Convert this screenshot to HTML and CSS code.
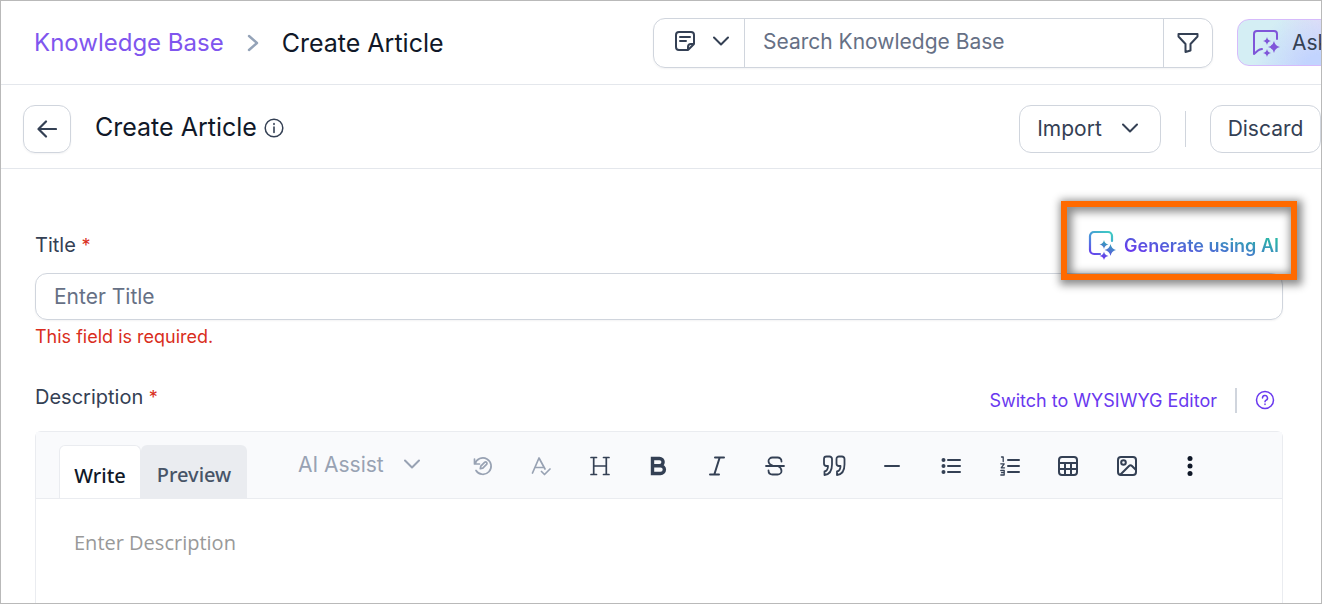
FILE: index.html
```html
<!DOCTYPE html>
<html lang="en">
<head>
  <meta charset="UTF-8">
  <meta name="viewport" content="width=device-width, initial-scale=1.0">
  <title>Create Article</title>
  <link rel="stylesheet" href="styles.css">
</head>
<body>
  <header class="topbar">
    <nav class="breadcrumb">
      <a href="#">Knowledge Base</a>
      <svg width="12" height="18" viewBox="0 0 12 18"><path d="M2 2l8 7-8 7" stroke="#94a3b8" stroke-width="2.400"/></svg>
      <span>Create Article</span>
    </nav>
    <div class="search">
      <button class="search-type" aria-label="Article type">
        <svg width="22" height="22" viewBox="0 0 22 22"><path d="M14 20H5a3 3 0 0 1-3-3V5a3 3 0 0 1 3-3h12a3 3 0 0 1 3 3v9l-6 6v-3a3 3 0 0 1 3-3h3M6 7h10M6 11h6"/></svg>
        <svg width="16" height="10" viewBox="0 0 16 10"><path d="M1 1.500l7 7 7-7"/></svg>
      </button>
      <input type="text" placeholder="Search Knowledge Base" aria-label="Search Knowledge Base">
      <button class="search-filter" aria-label="Filter">
        <svg width="22" height="22" viewBox="0 0 22 22"><path d="M1.500 2h19v2.500l-7 7.500v6.500l-5 1.500v-8l-7-7.500z"/></svg>
      </button>
    </div>
    <div class="ask-wrap">
      <button class="ask">
        <svg width="28" height="28" viewBox="0 0 28 28"><path d="M25 10V5a3 3 0 0 0-3-3H5a3 3 0 0 0-3 3v20l4-3.500c1.200-.9 2.200-1.300 4-1.500"/><path class="fill" d="M15 8q.6 3.400 4 4-3.400.6-4 4-.6-3.400-4-4 3.400-.6 4-4zM22 12q1 5 6 6-5 1-6 6-1-5-6-6 5-1 6-6zM15 20q.6 3.400 4 4-3.400.6-4 4-.6-3.400-4-4 3.400-.6 4-4z"/></svg>
        Ask
      </button>
    </div>
  </header>

  <div class="actionbar">
    <button class="btn back" aria-label="Back">
      <svg width="20" height="18" viewBox="0 0 20 18"><path d="M19 9H2M9 1.500L1.500 9 9 16.500" stroke-width="2.200"/></svg>
    </button>
    <h1>Create Article</h1>
    <svg width="20" height="20" viewBox="0 0 20 20"><circle cx="10" cy="10" r="8.800" stroke-width="1.500"/><path d="M10 9v5.500M10 5.500v1" stroke-width="1.600"/></svg>
    <div class="actions">
      <button class="btn import">Import
        <svg width="16" height="10" viewBox="0 0 16 10"><path d="M1 1.500l7 7 7-7"/></svg>
      </button>
      <span class="divider"></span>
      <button class="btn discard">Discard</button>
    </div>
  </div>

  <form class="article-form">
    <div class="title-head">
      <label for="title">Title <span class="required">*</span></label>
      <div class="generate-wrap">
        <button type="button" class="generate">
          <svg width="28" height="30" viewBox="0 0 28 30">
            <defs>
              <linearGradient id="ai" gradientUnits="userSpaceOnUse" x1="4" y1="26" x2="20" y2="2">
                <stop offset="0" stop-color="#6938ef"/>
                <stop offset="0.500" stop-color="#4a8edb"/>
                <stop offset="1" stop-color="#3ec8c4"/>
              </linearGradient>
              <linearGradient id="stars" gradientUnits="userSpaceOnUse" x1="15" y1="28" x2="22" y2="10">
                <stop offset="0" stop-color="#6938ef"/>
                <stop offset="1" stop-color="#2bb5b0"/>
              </linearGradient>
            </defs>
            <path d="M24 11V6a4 4 0 0 0-4-4H6a4 4 0 0 0-4 4v14a4 4 0 0 0 4 4h6" stroke="url(#ai)" stroke-width="2.200"/>
            <path fill="url(#stars)" stroke="none" d="M16 10q.7 3.800 4.500 4.500-3.800.7-4.500 4.500-.7-3.800-4.500-4.500 3.800-.7 4.500-4.500zM22.500 14q1 5 5.500 6-4.500 1-5.500 6-1-5-6-6 5-1 6-6zM16 21.500q.7 3.800 4.500 4.500-3.800.7-4.500 4-.7-3.300-4.500-4 3.800-.7 4.500-4.500z"/>
          </svg>
          <span>Generate using AI</span>
        </button>
        <div class="highlight"></div>
      </div>
    </div>
    <input type="text" id="title" class="title-input" placeholder="Enter Title">
    <p class="error">This field is required.</p>

    <div class="desc-head">
      <label for="description">Description <span class="required">*</span></label>
      <div class="desc-links">
        <a href="#">Switch to WYSIWYG Editor</a>
        <span class="bar"></span>
        <svg width="20" height="20" viewBox="0 0 20 20"><circle cx="10" cy="10" r="8.500"/><path d="M7.500 8a2.500 2.500 0 1 1 3.700 2.200c-.8.500-1.200.8-1.200 1.600M10 14v.6"/></svg>
      </div>
    </div>

    <div class="editor">
      <div class="toolbar">
        <div class="tabs">
          <button type="button" class="tab active">Write</button>
          <button type="button" class="tab">Preview</button>
        </div>
        <button type="button" class="assist">AI Assist
          <svg width="16" height="10" viewBox="0 0 16 10"><path d="M1 1.500l7 7 7-7"/></svg>
        </button>
        <div class="tools">
          <button type="button" class="muted" aria-label="Rewrite"><svg width="20" height="20" viewBox="0 0 20 20"><path d="M1.500 3v5h5M2 8a8.200 8.200 0 1 1 1 6.500M7.300 12.700l.5-2.500 4-4c1.400-.8 2.700.5 2 1.900l-4 4z" stroke-width="1.700"/></svg></button>
          <button type="button" class="muted" aria-label="Spell check"><svg width="20" height="20" viewBox="0 0 20 20"><path d="M1.500 17L8 2l6 11M4 11.500h8M10.500 15.500l3 3 5.500-5.500" stroke-width="1.700"/></svg></button>
          <button type="button" aria-label="Heading"><svg width="20" height="20" viewBox="0 0 20 20"><path d="M1 1.500h5.500M3.700 1.500v17M1 18.500h5.500M13.500 1.500H19M16.300 1.500v17M13.500 18.500H19M3.700 10h12.600" stroke-width="1.700"/></svg></button>
          <button type="button" aria-label="Bold"><svg width="20" height="20" viewBox="0 0 20 20"><path d="M4.500 2.500h7a3.600 3.600 0 0 1 0 7.200h-7zM4.500 9.700h8a3.900 3.900 0 0 1 0 7.800h-8z" stroke-width="3.400" stroke-linejoin="miter"/></svg></button>
          <button type="button" aria-label="Italic"><svg width="20" height="20" viewBox="0 0 20 20"><path d="M8 1.500h9M12.700 1.500L7.300 18.500M3 18.500h9"/></svg></button>
          <button type="button" aria-label="Strikethrough"><svg width="20" height="20" viewBox="0 0 20 20"><path d="M1 10h18M16.500 5.500c0-2.600-1.800-4-4-4h-5c-2.300 0-4 1.600-4 3.600 0 2.900 2 4 5 4.900M3.500 14.500c0 2.500 1.700 4 4 4h5c2.300 0 4-1.600 4-3.600 0-2.400-1.500-3.900-3.500-4.900" stroke-width="1.800"/></svg></button>
          <button type="button" aria-label="Quote"><svg width="24" height="22" viewBox="0 0 24 22"><path d="M10 9.500V4a2.500 2.500 0 0 0-2.500-2.500h-3A2.500 2.500 0 0 0 2 4v4.500A2.500 2.500 0 0 0 4.500 11H6c0 3.500-1 5-3.500 5.500v3.500c5-.5 7.500-3.700 7.500-10.500zM22.500 9.500V4A2.500 2.500 0 0 0 20 1.500h-3A2.500 2.500 0 0 0 14.500 4v4.500A2.500 2.500 0 0 0 17 11h1.500c0 3.500-1 5-3.500 5.500v3.500c5-.5 7.500-3.700 7.500-10.500z" stroke-width="1.800"/></svg></button>
          <button type="button" aria-label="Horizontal rule"><svg width="20" height="20" viewBox="0 0 20 20"><path d="M3 10h14"/></svg></button>
          <button type="button" aria-label="Bulleted list"><svg width="20" height="20" viewBox="0 0 20 20"><path d="M7 4h12M7 10h12M7 16h12"/><circle class="dot" cx="2.500" cy="4" r="2"/><circle class="dot" cx="2.500" cy="10" r="2"/><circle class="dot" cx="2.500" cy="16" r="2"/></svg></button>
          <button type="button" aria-label="Numbered list"><svg width="20" height="20" viewBox="0 0 20 20"><path d="M8 4h11M8 10h11M8 16h11"/><path d="M1.500 1h1.700v4.500M.8 7.800h3.400L1.200 11.800h3.300M.8 14.500h3.400v4.500H.8M1.500 16.700h2.700" stroke-width="1.300"/></svg></button>
          <button type="button" aria-label="Table"><svg width="20" height="20" viewBox="0 0 20 20"><rect x="1" y="1" width="18" height="18" rx="3"/><path d="M1 7h18M1 13h18M7 7v12M13 7v12"/></svg></button>
          <button type="button" aria-label="Image"><svg width="20" height="20" viewBox="0 0 20 20"><rect x="1" y="1" width="18" height="18" rx="3"/><circle cx="6.500" cy="6.500" r="2.300"/><path d="M3.500 18.500l8.500-8.500c1-1 2-1 3 0l4 4"/></svg></button>
        </div>
        <button type="button" class="more" aria-label="More"><svg width="6" height="20" viewBox="0 0 6 20"><circle cx="3" cy="2.500" r="2.500"/><circle cx="3" cy="10" r="2.500"/><circle cx="3" cy="17.500" r="2.500"/></svg></button>
      </div>
      <textarea id="description" placeholder="Enter Description"></textarea>
    </div>
  </form>
</body>
</html>
```
FILE: styles.css
```css
* {
  box-sizing: border-box;
}
body {
  margin: 0;
  height: 100vh;
  display: flex;
  flex-direction: column;
  overflow: hidden;
  border: 1px solid #b9b9b9;
  background-color: #fff;
  color: #344054;
  font-family: Inter, "Liberation Sans", sans-serif;
  font-size: 21px;
}
button, input, textarea {
  font: inherit;
  color: inherit;
  margin: 0;
  padding: 0;
  border: none;
  background: none;
}
button {
  display: flex;
  align-items: center;
  justify-content: center;
  white-space: nowrap;
  cursor: pointer;
}
a {
  text-decoration: none;
}
svg {
  flex: none;
  fill: none;
  stroke: #344054;
  stroke-width: 2;
  stroke-linecap: round;
  stroke-linejoin: round;
}
input::placeholder {
  color: #667085;
  opacity: 1;
}

/* top bar */
.topbar {
  display: flex;
  align-items: center;
  flex: none;
  height: 84px;
  padding-left: 33px;
  border-bottom: 1px solid #e4e7ec;
}
.breadcrumb {
  display: flex;
  align-items: center;
  gap: 23px;
  flex: 1;
  font-size: 25px;
  color: #101828;
  white-space: nowrap;
}
.breadcrumb a {
  font-size: 24px;
  color: #7f56ee;
}
.search {
  display: flex;
  width: 560px;
  height: 50px;
  border: 1px solid #d0d5dd;
  border-radius: 12px;
  box-shadow: 0 1px 2px rgba(16, 24, 40, 0.05);
}
.search input {
  flex: 1;
  min-width: 0;
  padding: 0 18px 2px;
  border: solid #d0d5dd;
  border-width: 0 1px;
}
.search-type {
  width: 90px;
  padding: 0 0 4px 4px;
  gap: 17px;
}
.search-filter {
  width: 48px;
}
.ask-wrap {
  width: 84px;
  margin-left: 24px;
  overflow: hidden;
}
.ask {
  height: 47px;
  padding: 0 14px;
  gap: 12px;
  border: 1px solid #d6bbfb;
  border-radius: 12px;
  background: radial-gradient(circle at 80% 120%, #c2d4fe 20%, rgba(199, 215, 254, 0) 70%), linear-gradient(to right, #d4eef4 40%, #e8e0f4 80%);
}
.ask svg {
  stroke: #7f56d9;
}
.ask .fill {
  fill: #7f56d9;
  stroke: none;
}

/* action bar */
.actionbar {
  display: flex;
  align-items: center;
  flex: none;
  height: 84px;
  padding-left: 22px;
  padding-top: 5px;
  border-bottom: 1px solid #e4e7ec;
}
.btn {
  height: 48px;
  padding-bottom: 2px;
  border: 1px solid #d0d5dd;
  border-radius: 12px;
}
.back {
  width: 48px;
  padding-bottom: 0;
  box-shadow: 0 1px 2px rgba(16, 24, 40, 0.05);
}
.actionbar > svg {
  margin-bottom: 3px;
}
h1 {
  margin: 0 7px 4px 24px;
  font-size: 25px;
  font-weight: 400;
  color: #101828;
}
.actions {
  display: flex;
  align-items: center;
  gap: 24px;
  margin-left: auto;
}
.import {
  width: 142px;
  padding-right: 5px;
  gap: 20px;
}
.divider {
  width: 1px;
  height: 36px;
  background-color: #d0d5dd;
}
.discard {
  width: 111px;
}

/* form */
.article-form {
  display: flex;
  flex-direction: column;
  flex: 1;
  min-height: 0;
  padding: 60px 38px 0 34px;
}
label {
  font-size: 20px;
  line-height: 26px;
}
.required {
  font-size: 18px;
  color: #d92d20;
}
.title-head {
  display: flex;
  align-items: center;
  justify-content: space-between;
  height: 32px;
}
.generate-wrap {
  position: relative;
  margin-right: 4px;
}
.generate {
  gap: 8px;
  font-size: 18px;
  font-weight: 600;
}
.generate span {
  background: linear-gradient(15deg, #6938ef 10%, #4775cf 50%, #2bb5a8 90%);
  -webkit-background-clip: text;
  background-clip: text;
  color: transparent;
}
.highlight {
  position: absolute;
  inset: -29px -18px -20px -27px;
  border: 6px solid #ff6a00;
  box-shadow: 2px 2px 8px 3px rgba(0, 0, 0, 0.45), inset 2px 2px 8px 3px rgba(0, 0, 0, 0.45);
  pointer-events: none;
}
.title-input {
  flex: none;
  height: 47px;
  margin-top: 12px;
  padding: 0 18px;
  border: 1px solid #d0d5dd;
  border-radius: 12px;
  box-shadow: 0 1px 2px rgba(16, 24, 40, 0.05);
}
.error {
  margin: 5px 0 0;
  font-size: 18px;
  line-height: 24px;
  color: #d92d20;
}
.desc-head {
  display: flex;
  justify-content: space-between;
  align-items: flex-start;
  height: 32px;
  margin-top: 35px;
}
.desc-links {
  display: flex;
  align-items: center;
  gap: 18px;
  height: 32px;
  margin-right: 8px;
  font-size: 18px;
}
.desc-links a {
  color: #6938ef;
}
.desc-links svg {
  stroke: #6938ef;
  stroke-width: 1.5;
}
.bar {
  width: 2px;
  height: 25px;
  background-color: #d0d5dd;
}

/* editor */
.editor {
  display: flex;
  flex-direction: column;
  flex: 1;
  min-height: 0;
  margin-top: 15px;
  border: 1px solid #eaecf0;
  border-bottom: none;
  border-radius: 6px 6px 0 0;
}
.toolbar {
  display: flex;
  align-items: center;
  height: 67px;
  padding-left: 23px;
  border-bottom: 1px solid #eaecf0;
  background-color: #f9fafc;
}
.tabs {
  display: flex;
  align-self: flex-end;
  font-family: "Noto Sans", sans-serif;
  font-size: 20px;
  font-weight: 500;
}
.tab {
  width: 106px;
  height: 53px;
  padding-top: 6px;
  border-radius: 6px 6px 0 0;
  background-color: #eaecf0;
  color: #475467;
}
.tab.active {
  width: 82px;
  border: 1px solid #eaecf0;
  border-bottom: none;
  background-color: #fff;
  color: #101828;
}
.assist {
  gap: 20px;
  padding-bottom: 2px;
  margin-left: 51px;
  color: #98a2b3;
}
.assist svg,
.muted svg {
  stroke: #98a2b3;
}
.tools {
  display: flex;
  justify-content: space-between;
  width: 668px;
  padding-top: 2px;
  margin-left: 51px;
}
.tools button {
  width: 24px;
  height: 24px;
}
.dot,
.more svg {
  fill: #344054;
  stroke: none;
}
.more {
  width: 24px;
  padding-top: 2px;
  margin-left: 39px;
}
.more svg {
  fill: #101828;
}
textarea {
  flex: 1;
  padding: 30px 38px;
  font-family: "Open Sans", "Noto Sans", sans-serif;
  font-size: 20px;
  resize: none;
}
textarea::placeholder {
  color: #999;
  opacity: 1;
}
```
